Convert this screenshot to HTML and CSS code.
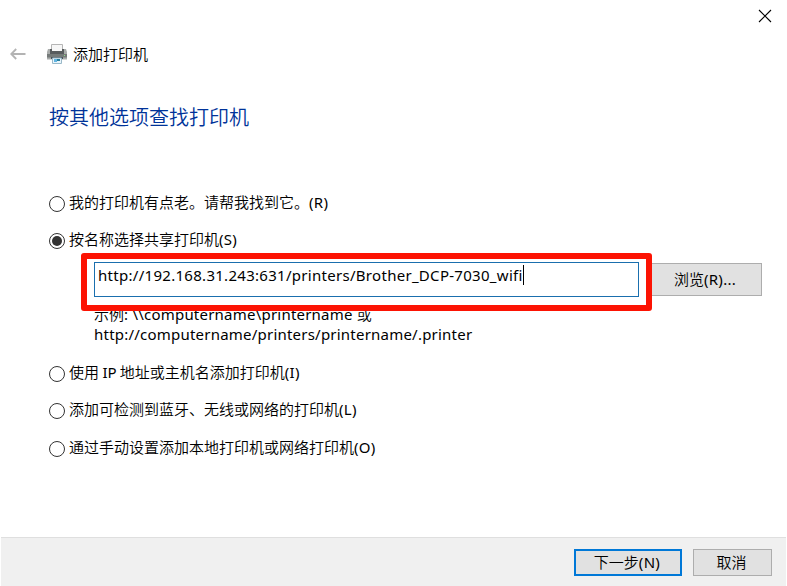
FILE: index.html
```
<!DOCTYPE html>
<html lang="zh-CN">
<head>
<meta charset="utf-8">
<title>添加打印机</title>
<link rel="stylesheet" href="styles.css">
</head>
<body>
<div class="window">
  <div class="titlebar">
    <svg class="close" width="14" height="14" viewBox="0 0 14 14"><path d="M1 1l12 12M13 1L1 13"/></svg>
  </div>
  <header class="header">
    <svg class="back" width="16" height="12" viewBox="0 0 16 12"><path d="M6.2 1L1.2 6l5 5M1.2 6H15.500"/></svg>
    <svg class="printer" width="20" height="20" viewBox="0 0 20 20">
      <path d="M4.500.500h11V8h-11z" fill="#f7f7f7" stroke="#b5b5b5"/>
      <path d="M1 5h3v4h12V5h3l1 3v7.500H0V8z" fill="#a9acab"/>
      <path d="M3 5h2v2h10V5h2v5H3z" fill="#585c5e"/>
      <path d="M0 10h20v3.500H0z" fill="#757a79"/>
      <path d="M4 13h12v2H4z" fill="#4b5358"/>
      <path d="M5.500 14h9v5.500h-9z" fill="#e9f5fb" stroke="#9ab9c9"/>
      <path d="M7 15h3v3H7z" fill="#62b5e2"/><path d="M10 15h3v2h-3z" fill="#277e9c"/>
      <path d="M17 11.500h1" stroke="#8fe084"/>
    </svg>
    <span class="caption">添加打印机</span>
  </header>
  <main class="main">
    <h1 class="title">按其他选项查找打印机</h1>
    <div class="options">
      <label class="option"><i class="radio"></i><span>我的打印机有点老。请帮我找到它。<span class="key">(R)</span></span></label>
      <label class="option"><i class="radio checked"></i><span>按名称选择共享打印机<span class="key">(S)</span></span></label>
      <div class="share">
        <div class="field"><span class="url">http://192.168.31.243:631/printers/Brother_DCP-7030_wifi</span><i class="caret"></i></div>
        <div class="button browse">浏览<span class="key">(R)...</span></div>
        <div class="highlight"></div>
      </div>
      <div class="example">示例<span class="latin">: \\computername\printername </span>或<br><span class="latin">http://computername/printers/printername/.printer</span></div>
      <label class="option"><i class="radio"></i><span>使用<span class="ip"> IP </span>地址或主机名添加打印机<span class="key">(I)</span></span></label>
      <label class="option last"><i class="radio"></i><span>添加可检测到蓝牙、无线或网络的打印机<span class="key">(L)</span></span></label>
      <label class="option"><i class="radio"></i><span>通过手动设置添加本地打印机或网络打印机<span class="key">(O)</span></span></label>
    </div>
  </main>
  <footer class="footer">
    <div class="button next">下一步<span class="key">(N)</span></div>
    <div class="button cancel">取消</div>
  </footer>
</div>
</body>
</html>
```

FILE: styles.css
```
* { box-sizing: border-box; }
body {
  margin: 0;
  background: #fff;
  color: #000;
  font: 350 15px/20px "Noto Sans", "Noto Sans CJK SC", sans-serif;
  white-space: nowrap;
  overflow: hidden;
}
.window { display: flex; flex-direction: column; width: 787px; height: 586px; }
.titlebar { display: flex; justify-content: flex-end; height: 32px; padding: 9px 15px 0 0; }
.close { fill: none; stroke: #000; stroke-width: 1.1; }
.header { display: flex; align-items: center; height: 44px; padding-left: 10px; }
.back { fill: none; stroke: #b3b3b3; stroke-width: 1.8; }
.printer { margin-left: 21px; }
.caption { margin-left: 6px; }
.main { flex: 1; padding: 27px 0 0 49px; }
.title { margin: 0; color: #003399; font-size: 20px; line-height: 30px; font-weight: 350; }
.options { padding-top: 51px; }
.option { display: flex; align-items: center; gap: 4px; height: 37px; }
.option > span { padding-bottom: 2px; }
.key, .url, .latin, .ip { font-weight: 400; }
.key { letter-spacing: 0.3px; }
.ip { letter-spacing: -0.3px; }
.last { margin-bottom: 1px; }
.radio {
  display: flex; align-items: center; justify-content: center;
  width: 16px; height: 16px; margin-top: 2px;
  border: 1px solid #333; border-radius: 50%; background: #fff;
}
.checked::before { content: ""; width: 10px; height: 10px; border-radius: 50%; background: #333; }
.share { position: relative; display: flex; align-items: center; height: 35px; margin: 4px 0 0 45px; }
.field { display: flex; width: 545px; height: 35px; padding: 2px 0 0 3px; border: 1px solid #1a6fae; background: #fff; }
.url { letter-spacing: 0.29px; }
.caret { width: 1px; height: 20px; background: #000; }
.button { display: flex; align-items: center; justify-content: center; padding: 0 2px 1px 0; border: 1px solid #adadad; background: #e1e1e1; }
.browse { width: 112px; height: 33px; margin-left: 11px; }
.highlight { position: absolute; left: -13px; top: -9px; width: 571px; height: 58px; border: 6px solid #fc1303; border-radius: 3px; }
.example { height: 57px; padding: 7px 0 0 45px; }
.latin { letter-spacing: 0.22px; }
.footer {
  display: flex; justify-content: flex-end; gap: 11px;
  height: 49px; margin: 0 1px; padding: 11px 14px 0 0;
  border-top: 1px solid #dfdfdf; background: #f0f0f0;
}
.next { width: 108px; height: 27px; border: 2px solid #0078d7; }
.cancel { width: 79px; height: 27px; }
```
